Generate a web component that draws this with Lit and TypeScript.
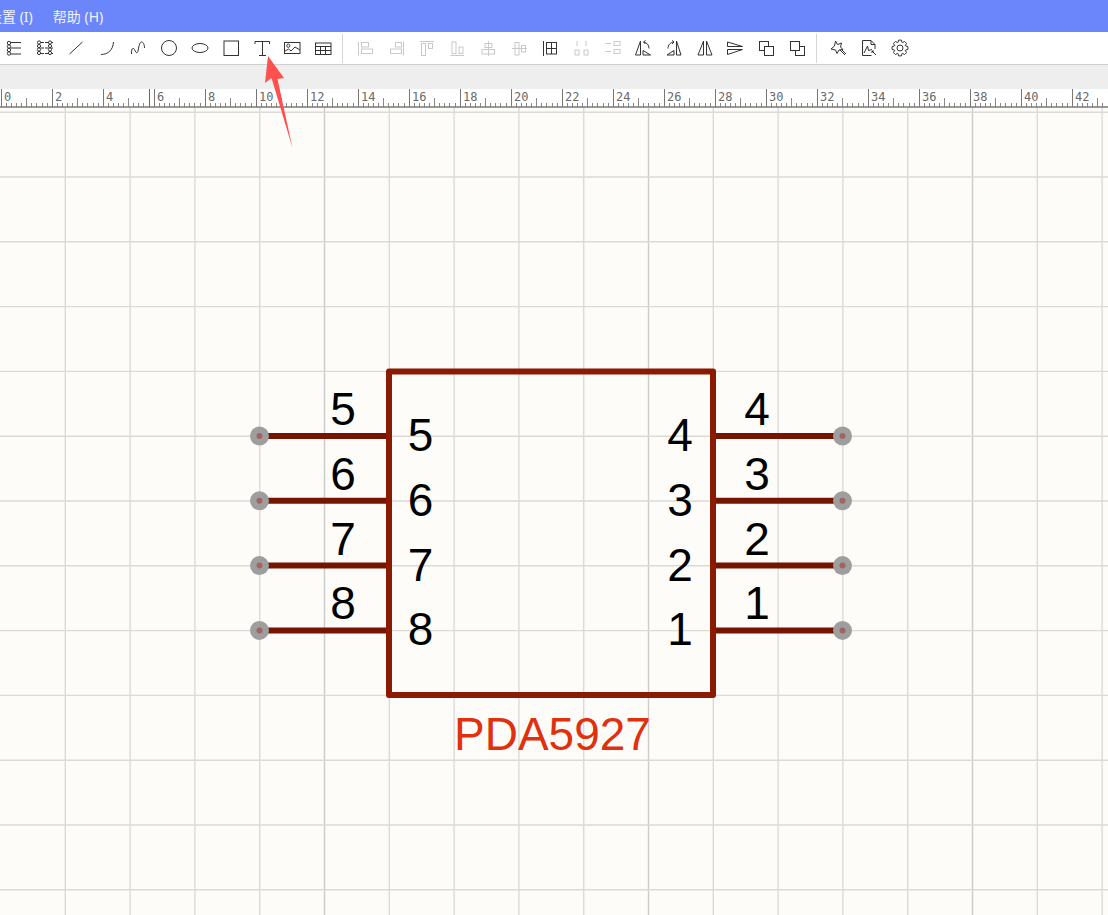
import { LitElement, html, css, svg } from "lit";
import { customElement } from "lit/decorators.js";

const gearPath = () => {
  const pts: string[] = [];
  const n = 8;
  for (let i = 0; i < n; i++) {
    const a = (i / n) * Math.PI * 2;
    const w = Math.PI / n;
    const p = (r: number, t: number) => `${(r * Math.cos(t)).toFixed(2)} ${(r * Math.sin(t)).toFixed(2)}`;
    pts.push((i ? "L" : "M") + p(5.8, a - w * 0.95));
    pts.push("L" + p(8, a - w * 0.45));
    pts.push("L" + p(8, a + w * 0.45));
    pts.push("L" + p(5.8, a + w * 0.95));
  }
  return pts.join(" ") + "Z";
};

const left = [
  svg`<g class="dk"><circle cx="-5" cy="-5" r="1.7"/><circle cx="-5" cy="-1.5" r="1.7"/><circle cx="-5" cy="2" r="1.7"/><circle cx="-5" cy="5.5" r="1.7"/><path d="M-3.5 -5.5H7M-3.5 0H7M-3.5 6H7"/></g>`,
  svg`<g class="dk"><circle cx="-6" cy="-5.5" r="1.6"/><circle cx="-6" cy="-2" r="1.6"/><circle cx="-6" cy="1.5" r="1.6"/><circle cx="-6" cy="5" r="1.6"/><circle cx="5" cy="-5.5" r="1.6"/><circle cx="5" cy="-2" r="1.6"/><circle cx="5" cy="1.5" r="1.6"/><circle cx="5" cy="5" r="1.6"/><path d="M-4.5 -5.5H-1M-4.5 0H-1M-4.5 5.5H-1M0 -5.5H3.5M0 0H3.5M0 5.5H3.5M6.5 -5.5H8M6.5 0H8M6.5 5.5H8"/></g>`,
  svg`<path class="dk" d="M-6.5 6L6.5 -6"/>`,
  svg`<path class="dk" d="M-6 6.5C1 6.5 6 2 6.5 -6"/>`,
  svg`<path class="dk" d="M-6.5 6C-7 1 -5 -1 -3.5 1.5C-2 5 -1 6 0 3C1 -3 2 -6 3.5 -6C5.5 -6 6.5 -3 6.5 0"/>`,
  svg`<circle class="dk" r="7.5"/>`,
  svg`<ellipse class="dk" rx="8" ry="4.5"/>`,
  svg`<rect class="dk" x="-7" y="-7" width="14.5" height="14.5"/>`,
  svg`<path class="dk" d="M-7 -4V-6.5H7.5V-4M0.5 -6.5V7.5M-3 7.5H4"/>`,
  svg`<g class="dk"><rect x="-7.5" y="-5.5" width="15.5" height="11"/><circle cx="-3.7" cy="-2.3" r="1.6"/><path d="M-7.5 3.5L-3.5 1L-1 3L3 -1L8 2"/></g>`,
  svg`<g class="dk"><rect x="-7.5" y="-5" width="15.5" height="11.5"/><path d="M-7.5 -1.5H8M-7.5 2.5H8M-2.5 -1.5V6.5M2.5 -1.5V6.5"/></g>`,
];

const mid = [
  svg`<g class="gy"><path d="M-6.5 -6.5V7.5"/><rect x="-3.5" y="-5.5" width="7" height="4.5"/><rect x="-3.5" y="1" width="11" height="4.5"/></g>`,
  svg`<g class="gy"><path d="M7.5 -6.5V7.5"/><rect x="-0.5" y="-5.5" width="6" height="4.5"/><rect x="-5.5" y="1" width="11" height="4.5"/></g>`,
  svg`<g class="gy"><path d="M-7 -6.5H7"/><rect x="-5.5" y="-4.5" width="4" height="12"/><rect x="1.5" y="-4.5" width="4" height="5"/></g>`,
  svg`<g class="gy"><path d="M-6.5 7.5H7"/><rect x="-5" y="-6" width="4" height="11.5"/><rect x="2" y="-1" width="4" height="6.5"/></g>`,
  svg`<g class="gy"><path d="M0.5 -7V8"/><rect x="-3" y="-4.5" width="7" height="4"/><rect x="-6" y="1.5" width="12.5" height="4.5"/></g>`,
  svg`<g class="gy"><path d="M-7 0.5H8"/><rect x="-4" y="-5.5" width="4" height="12.5"/><rect x="2.5" y="-2.5" width="4" height="6.5"/></g>`,
  svg`<g class="dk"><path d="M-6.5 -7V8"/><rect x="-3.5" y="-5.5" width="10" height="11.5"/><path d="M-3.5 0.5H6.5M1.5 -5.5V6"/></g>`,
  svg`<g class="gy"><path d="M-4 -7V-2M5 -7V-2"/><rect x="-6" y="2" width="4" height="5"/><rect x="3" y="2" width="4" height="5"/></g>`,
  svg`<g class="gy"><path d="M-6.5 -4.5H-1M-6.5 3.5H-1"/><rect x="2" y="-6.5" width="6" height="4"/><rect x="2" y="1.5" width="6" height="4"/></g>`,
  svg`<g class="dk"><path d="M-7.5 7L-2.5 -7V7Z"/><path d="M0 7H7.5L0 2.5Z"/><path d="M0.5 -6C4 -5.5 6 -3 6 0.5M0.5 -6L2.5 -7.5M0.5 -6L2.5 -4"/></g>`,
  svg`<g class="dk"><path d="M7 7L2.5 -7V7Z"/><path d="M0 7H-7L0 2.5Z"/><path d="M0 -6C-4 -5.5 -6 -3 -6 0.5M0 -6L-2 -7.5M0 -6L-2 -4"/></g>`,
  svg`<g class="dk"><path d="M-1.5 7V-7L-7 7Z"/><path d="M1.5 7V-7L7 7Z"/></g>`,
  svg`<g class="dk"><path d="M-7.5 -6L7.5 -1.5H-7.5Z"/><path d="M-7.5 6.5L7.5 1.5H-7.5Z"/></g>`,
  svg`<g class="dk"><rect x="-6.5" y="-6.5" width="9" height="9"/><rect class="fw" x="-1.5" y="-1.5" width="9" height="9"/></g>`,
  svg`<g class="dk"><rect class="fw" x="-1.5" y="-1.5" width="9" height="9"/><rect class="fw" x="-6.5" y="-6.5" width="9" height="9"/></g>`,
];

const end = [
  svg`<g class="dk"><path d="M-2.5 -7L-0.5 -3.5L3.5 -5L2.5 -1L5 1.5L1 2L-1 5.5L-2.5 2L-7 1L-3.5 -2Z"/><path d="M2 2L7 7M3.5 1.5L8 6"/></g>`,
  svg`<g class="dk"><path d="M2.5 7.5H-6.5V-7.5H2L6 -3.5V1"/><path d="M2 -7.5V-3.5H6"/><path d="M-5 5L-1.5 -2L-0.5 2.5L3 1.5"/><path d="M3 3L7 7M5 3L3 3V5" /></g>`,
  svg`<g class="dk"><path d=${gearPath()}/><circle r="3"/></g>`,
];

const VX = Array.from({ length: 17 }, (_, i) => 65.3 + i * 64.8);
const HY = Array.from({ length: 13 }, (_, i) => 112.2 + i * 64.8);
const PINS_Y = [436, 500.8, 565.6, 630.4];

@customElement("app-root")
export class AppRoot extends LitElement {
  static styles = css`
    :host {
      display: flex;
      flex-direction: column;
      position: relative;
      width: 100%;
      height: 100vh;
      overflow: hidden;
      background: #fff;
      font-family: "Liberation Sans", "Noto Sans CJK SC", sans-serif;
    }
    .menubar {
      flex: 0 0 32px;
      display: flex;
      align-items: center;
      gap: 20px;
      background: #6b86fb;
      color: #f0f3ff;
      font-size: 14px;
      font-family: "Noto Sans", "Noto Sans CJK SC", sans-serif;
      overflow: hidden;
    }
    .menu-first {
      margin-left: -12px;
    }
    .toolbar {
      flex: 0 0 32px;
      display: flex;
      align-items: center;
      background: #fff;
      border-bottom: 1px solid #d0d0d0;
    }
    .btn {
      flex: 0 0 30.9px;
      height: 32px;
      display: flex;
      align-items: center;
      justify-content: center;
    }
    .btn:first-child {
      margin-left: -1px;
    }
    .btn svg {
      width: 20px;
      height: 20px;
      overflow: visible;
    }
    .dk,
    .dk * {
      fill: none;
      stroke: #333;
      stroke-width: 1;
    }
    .gy,
    .gy * {
      fill: none;
      stroke: #c9c9c9;
      stroke-width: 1;
    }
    .dk .fw {
      fill: #fff;
    }
    .sep {
      flex: 0 0 1px;
      height: 29px;
      margin: 0 6px 0 3.5px;
      background: #d6d6d6;
    }
    .sep.second {
      margin: 0 5.5px 0 3.5px;
    }
    .band {
      flex: 0 0 24px;
      background: #eeeeee;
    }
    .ruler {
      flex: 0 0 19px;
      display: block;
      width: 100%;
      background: #fff;
    }
    .ruler text {
      font-family: "DejaVu Sans Mono", monospace;
      font-size: 12px;
      fill: #6a6a6a;
    }
    .canvas {
      flex: 1 1 auto;
      display: block;
      width: 100%;
      min-height: 0;
      background: #fdfcf8;
    }
    .grid {
      stroke: #dadad8;
      stroke-width: 1.4;
    }
    .grid.major {
      stroke: #cbcbc9;
    }
    .wire {
      stroke: #771400;
      stroke-width: 6;
    }
    .body {
      fill: none;
      stroke: #8a1a00;
      stroke-width: 6;
      stroke-linejoin: round;
    }
    .num {
      font-family: "Liberation Sans", Arial, sans-serif;
      font-size: 46px;
      fill: #000;
      text-anchor: middle;
    }
    .name {
      font-family: "Liberation Sans", Arial, sans-serif;
      font-size: 46px;
      fill: #e0300e;
      text-anchor: middle;
    }
    .pad {
      fill: #9e9e9e;
    }
    .pad-c {
      fill: #a06464;
    }
    .arrow {
      position: absolute;
      left: 0;
      top: 0;
      width: 100%;
      height: 100%;
      pointer-events: none;
    }
    .arrow polygon {
      fill: #ff5050;
    }
  `;

  private icon(i: unknown) {
    return html`<div class="btn"><svg viewBox="-10 -10 20 20">${i}</svg></div>`;
  }

  private ruler() {
    const ticks = [];
    const labels = [];
    for (let i = 0; i <= 216; i++) {
      const x = Math.round(0.7 + i * 5.1) + 0.5;
      const h = i % 10 === 0 ? 18 : i % 5 === 0 ? 9 : 4;
      ticks.push(svg`<line x1=${x} x2=${x} y1=${18 - h} y2="18" stroke=${i % 10 === 0 ? "#777" : "#888"} />`);
      if (i % 10 === 0 && i / 5 <= 42) labels.push(svg`<text x=${x + 2.5} y="12">${i / 5}</text>`);
    }
    return html`<svg class="ruler" viewBox="0 89 1108 19" preserveAspectRatio="xMinYMin">
      <g transform="translate(0 89)">
        ${labels}${ticks}
        <line x1="0" x2="1108" y1="18" y2="18" stroke="#777" stroke-width="1.5" />
        <line x1="149.5" x2="149.5" y1="0" y2="18" stroke="#666" />
      </g>
    </svg>`;
  }

  private pin(y: number, leftSide: boolean, n: number) {
    const x1 = leftSide ? 259.5 : 713;
    const x2 = leftSide ? 389 : 842.5;
    const pad = leftSide ? x1 : x2;
    const outer = leftSide ? 343 : 757;
    const inner = leftSide ? 420.5 : 680;
    return svg`
      <line class="wire" x1=${x1} x2=${x2} y1=${y} y2=${y} />
      <circle class="pad" cx=${pad} cy=${y} r="9.5" />
      <circle class="pad-c" cx=${pad} cy=${y} r="3" />
      <text class="num" x=${outer} y=${y - 11}>${n}</text>
      <text class="num" x=${inner} y=${y + 15}>${n}</text>
    `;
  }

  render() {
    return html`
      <div class="menubar">
        <span class="menu-first">设置 (I)</span>
        <span>帮助 (H)</span>
      </div>
      <div class="toolbar">
        ${left.map((i) => this.icon(i))}
        <div class="sep"></div>
        ${mid.map((i) => this.icon(i))}
        <div class="sep second"></div>
        ${end.map((i) => this.icon(i))}
      </div>
      <div class="band"></div>
      ${this.ruler()}
      <svg class="canvas" viewBox="0 108 1108 807" preserveAspectRatio="xMinYMin">
        ${VX.map((x, i) => svg`<line class="grid ${i % 5 === 4 ? "major" : ""}" x1=${x} x2=${x} y1="108" y2="915" />`)}
        ${HY.map((y) => svg`<line class="grid" x1="0" x2="1108" y1=${y} y2=${y} />`)}
        ${[8, 7, 6, 5].map((n, i) => this.pin(PINS_Y[3 - i], true, n))}
        ${[1, 2, 3, 4].map((n, i) => this.pin(PINS_Y[3 - i], false, n))}
        <rect class="body" x="389" y="371.5" width="324" height="323.5" />
        <text class="name" x="552.5" y="750">PDA5927</text>
      </svg>
      <svg class="arrow" viewBox="0 0 1108 915" preserveAspectRatio="xMinYMin">
        <polygon points="268,56 284,78 277.5,79 292.5,148 271.5,78 265,83" />
      </svg>
    `;
  }
}
